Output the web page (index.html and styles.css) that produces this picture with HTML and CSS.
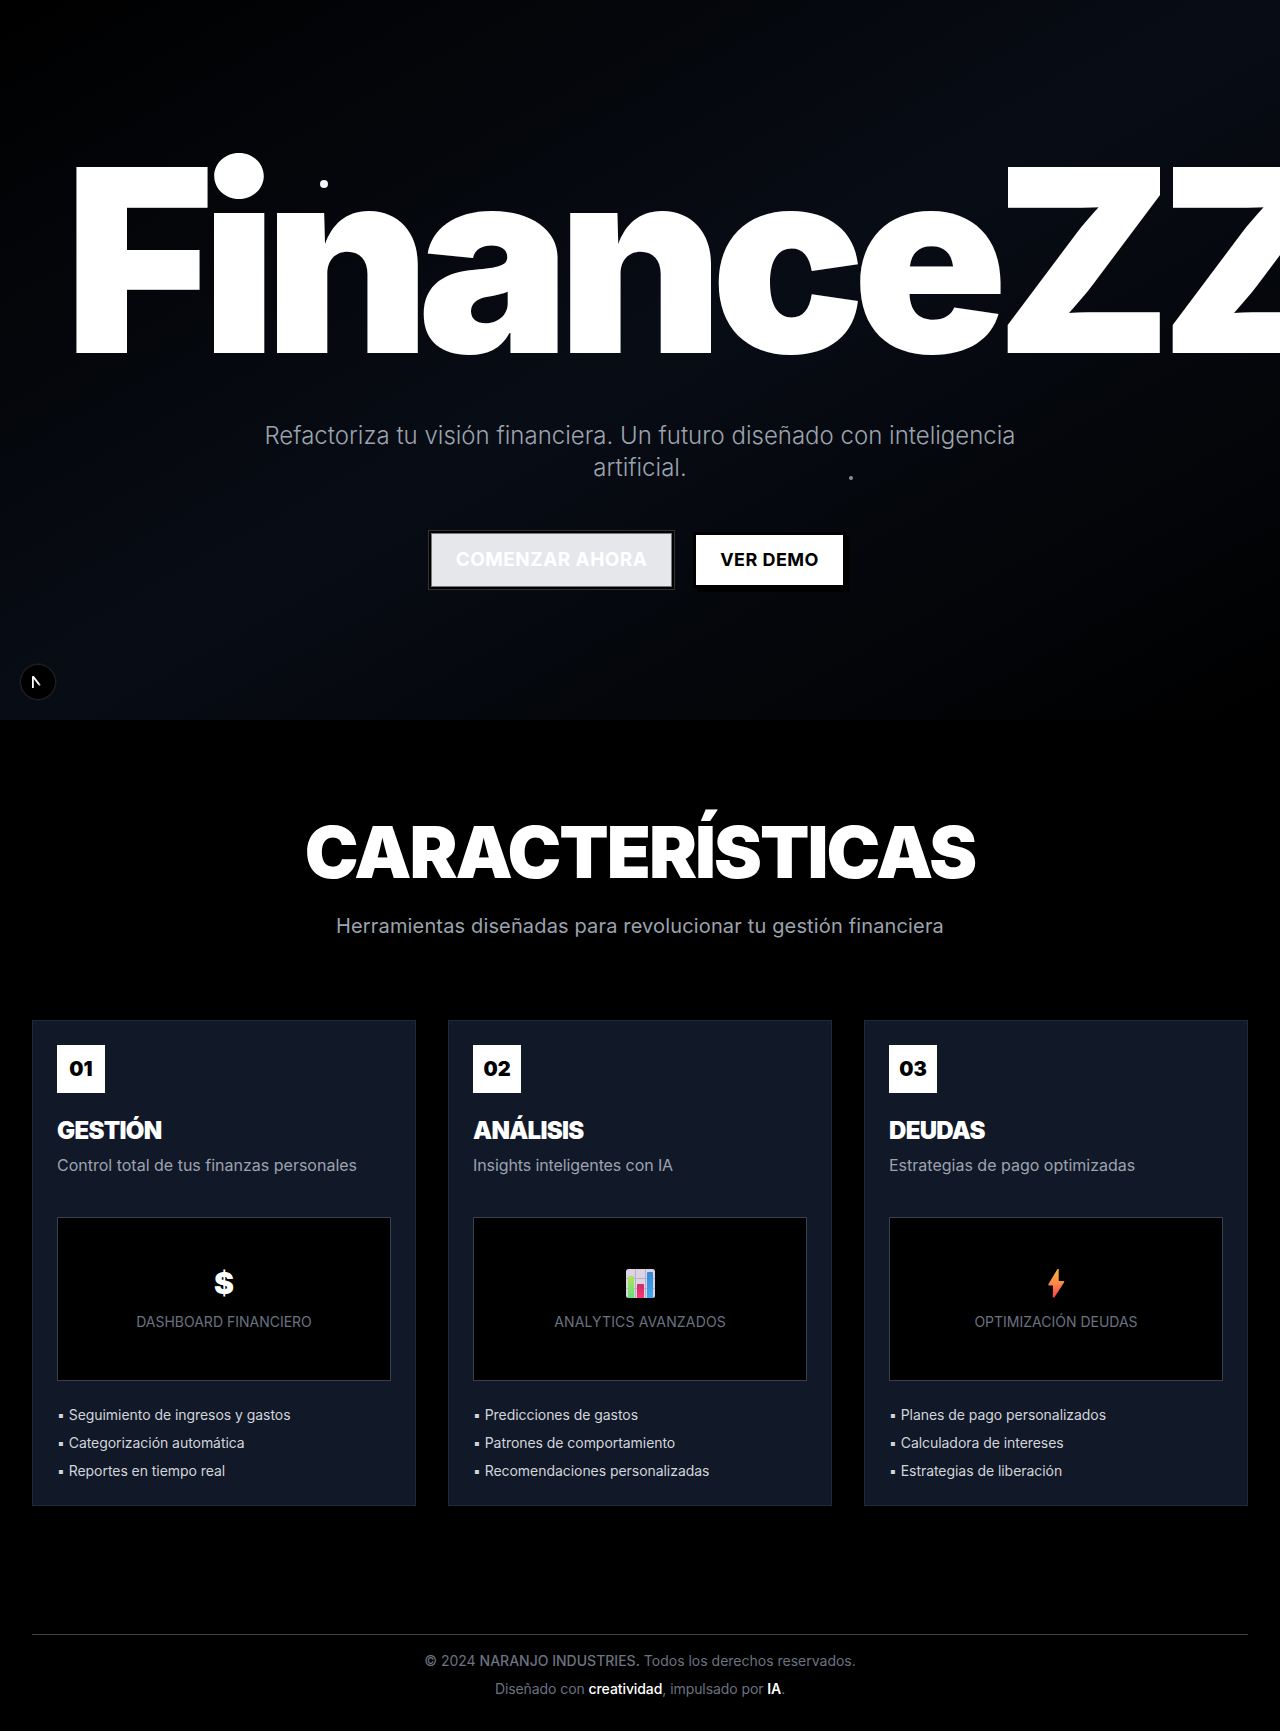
FILE: index.html
```html
<!DOCTYPE html>
<html lang="es">
<head>
<meta charset="utf-8">
<title>FinanceZZ</title>
<link rel="stylesheet" href="styles.css">
</head>
<body>
<section class="hero">
  <span class="dot dot-large"></span>
  <span class="dot dot-small"></span>
  <div class="hero-inner">
    <h1 class="brand">FinanceZZ</h1>
    <p class="tagline">Refactoriza tu visión financiera. Un futuro diseñado con inteligencia artificial.</p>
    <div class="actions">
      <button class="btn btn-primary">COMENZAR AHORA</button>
      <button class="btn btn-secondary">VER DEMO</button>
    </div>
  </div>
  <div class="badge">
    <svg width="36" height="36" viewBox="0 0 36 36" fill="none">
      <defs><linearGradient id="fade" x1="14" y1="13" x2="21" y2="22" gradientUnits="userSpaceOnUse"><stop offset=".7" stop-color="#fff"/><stop offset="1" stop-color="#fff" stop-opacity=".4"/></linearGradient></defs>
      <path d="M12.900 24V12.300" stroke="#fff" stroke-width="1.800"/>
      <path d="M13 12.500L20 21.500" stroke="url(#fade)" stroke-width="2"/>
    </svg>
  </div>
</section>
<section class="features">
  <h2 class="features-title">CARACTERÍSTICAS</h2>
  <p class="features-sub">Herramientas diseñadas para revolucionar tu gestión financiera</p>
  <div class="cards">
    <article class="card">
      <div class="num">01</div>
      <h3 class="card-title">GESTIÓN</h3>
      <p class="card-text">Control total de tus finanzas personales</p>
      <div class="preview"><div class="icon">$</div><div class="label">DASHBOARD FINANCIERO</div></div>
      <ul class="list"><li>▪ Seguimiento de ingresos y gastos</li><li>▪ Categorización automática</li><li>▪ Reportes en tiempo real</li></ul>
    </article>
    <article class="card">
      <div class="num">02</div>
      <h3 class="card-title">ANÁLISIS</h3>
      <p class="card-text card-text-tight">Insights inteligentes con IA</p>
      <div class="preview"><div class="icon">
        <svg width="37" height="32" viewBox="0 0 37 32">
          <defs>
            <linearGradient id="green" x2="0" y2="1"><stop stop-color="#b5e05c"/><stop offset="1" stop-color="#62e276"/></linearGradient>
            <linearGradient id="pink" x2="0" y2="1"><stop stop-color="#cf2c67"/><stop offset="1" stop-color="#f23c78"/></linearGradient>
            <linearGradient id="blue" x2="0" y2="1"><stop stop-color="#3488d8"/><stop offset="1" stop-color="#43a9f2"/></linearGradient>
          </defs>
          <rect x="4" y="2" width="29" height="29" rx="2.5" fill="#dcd3e4"/>
          <path d="M13.5 2v29M23.5 2v29M4 11.5h29M4 21.5h29" stroke="#b9b0c4"/>
          <path d="M6 31V10q0-1 1-1h4q1 0 1 1v21z" fill="url(#green)"/>
          <path d="M15 31V18q0-1 1-1h5q1 0 1 1v13z" fill="url(#pink)"/>
          <path d="M25 31V6q0-1 1-1h4q1 0 1 1v25z" fill="url(#blue)"/>
        </svg></div><div class="label label-wide">ANALYTICS AVANZADOS</div></div>
      <ul class="list"><li>▪ Predicciones de gastos</li><li>▪ Patrones de comportamiento</li><li>▪ Recomendaciones personalizadas</li></ul>
    </article>
    <article class="card">
      <div class="num">03</div>
      <h3 class="card-title">DEUDAS</h3>
      <p class="card-text">Estrategias de pago optimizadas</p>
      <div class="preview"><div class="icon">
        <svg width="37" height="32" viewBox="0 0 37 32">
          <defs><linearGradient id="bolt" x2="0" y2="1"><stop stop-color="#f9b43f"/><stop offset=".5" stop-color="#fb8a45"/><stop offset="1" stop-color="#f5434f"/></linearGradient></defs>
          <path d="M19.5 2L10.5 17q-.8 1.5.8 1.5H15l-.3 12h1.6L26 15.500q.8-1.500-.8-1.500H20.700V2z" fill="url(#bolt)"/>
        </svg></div><div class="label">OPTIMIZACIÓN DEUDAS</div></div>
      <ul class="list"><li>▪ Planes de pago personalizados</li><li>▪ Calculadora de intereses</li><li>▪ Estrategias de liberación</li></ul>
    </article>
  </div>
</section>
<footer class="footer">
  <div class="footer-inner">
    <p>© 2024 <span class="company">NARANJO INDUSTRIES.</span> Todos los derechos reservados.</p>
    <p class="credit">Diseñado con <span class="strong">creatividad</span>, impulsado por <span class="strong bold">IA</span>.</p>
  </div>
</footer>
</body>
</html>
```
FILE: styles.css
```css
* { box-sizing: border-box; margin: 0; padding: 0; }
body { background: #000; color: #fff; font-family: Inter, sans-serif; line-height: 1.5; overflow-x: hidden; }
.hero { position: relative; height: 720px; overflow: hidden; background: linear-gradient(to bottom right, #000 0%, #080c15 50%, #000 100%); display: flex; align-items: center; justify-content: center; }
.hero-inner { width: 1152px; padding-bottom: 2px; text-align: center; }
.brand { font-size: 256px; font-weight: 900; line-height: 1; letter-spacing: -12.8px; margin-bottom: 32px; text-align: left; text-indent: 0.5px; white-space: nowrap; }
.tagline { width: 768px; margin: 0 auto 50px; font-size: 24px; line-height: 32px; font-weight: 300; color: #9ca3af; }
.actions { display: flex; justify-content: center; align-items: center; gap: 25px; padding-right: 5px; }
.btn { font-family: inherit; font-size: 18px; line-height: 28px; font-weight: 700; letter-spacing: 0.025em; border: 0; }
.btn-primary { width: 239px; height: 52px; font-size: 18.9px; color: #fff; background: #e5e7eb; box-shadow: 0 0 0 1px #777, 0 0 0 3px #000, 0 0 0 4px #333; }
.btn-secondary { width: 147px; height: 50px; color: #000; background: #fff; box-shadow: 0 0 0 3px #000, 4px 4px 0 3px #000; }
.dot { position: absolute; border-radius: 50%; }
.dot-large { left: 320px; top: 180px; width: 8px; height: 8px; background: #f4f4f4; }
.dot-small { left: 849px; top: 476px; width: 4px; height: 4px; background: #8c8f96; }
.badge { position: absolute; left: 20px; top: 664px; width: 36px; height: 36px; border-radius: 50%; background: #000; box-shadow: inset 0 0 0 1px #222, 0 0 0 .5px #222; }
.badge svg { display: block; }
.features { padding: 96px 32px 128px; }
.features-title { font-size: 72px; line-height: 72px; font-weight: 900; letter-spacing: -1.95px; text-align: center; margin-bottom: 24px; }
.features-sub { font-size: 20px; line-height: 28px; letter-spacing: 0.15px; color: #9ca3af; text-align: center; margin-bottom: 80px; }
.cards { display: grid; grid-template-columns: repeat(3, 1fr); gap: 32px; }
.card { border: 1px solid #1f2937; background: #111827; padding: 24px; }
.num { width: 48px; height: 48px; margin-bottom: 22px; background: #fff; color: #000; display: flex; align-items: center; justify-content: center; font-size: 20px; font-weight: 900; }
.card-title { font-size: 24px; line-height: 32px; font-weight: 900; letter-spacing: -0.7px; }
.card-text { font-size: 16px; line-height: 24px; color: #9ca3af; margin: 6px 0 40px; }
.card-text-tight { letter-spacing: -0.1px; }
.preview { height: 164px; padding-bottom: 2px; border: 1px solid #374151; background: #000; display: flex; flex-direction: column; align-items: center; justify-content: center; }
.icon { height: 40px; font-size: 30px; line-height: 36px; font-weight: 900; margin-bottom: 7px; }
.icon svg { transform: translateY(2px); }
.label { font-size: 14px; line-height: 20px; color: #6b7280; }
.label-wide { letter-spacing: 0.15px; }
.list { list-style: none; margin-top: 24px; display: flex; flex-direction: column; gap: 8px; font-size: 14px; line-height: 20px; letter-spacing: -0.05px; color: #d1d5db; }
.footer { padding: 0 32px; }
.footer-inner { border-top: 1px solid #404040; padding: 16px 0 32px; text-align: center; font-size: 14px; line-height: 20px; color: #6b7280; display: flex; flex-direction: column; gap: 8px; }
.company { font-weight: 500; }
.credit { letter-spacing: -0.08px; }
.strong { color: #fff; font-weight: 500; }
.bold { font-weight: 600; }
```
